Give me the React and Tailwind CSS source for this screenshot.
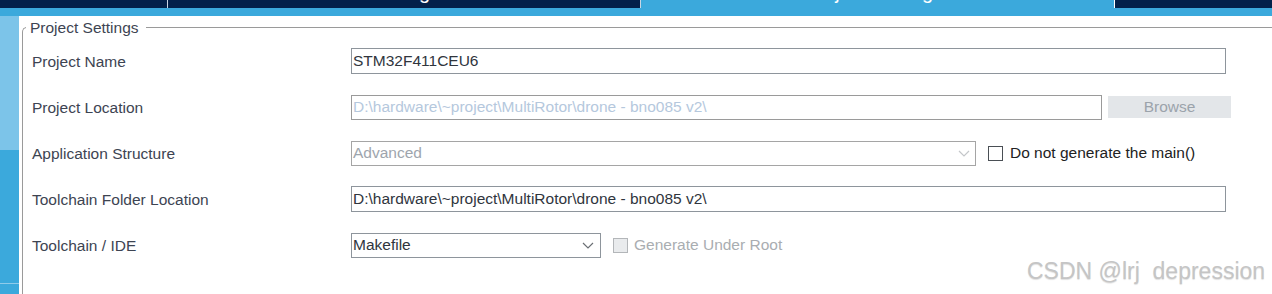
import React from 'react';

const font = { fontFamily: '"Liberation Sans", Arial, sans-serif' };

function Chevron({ color }) {
  return (
    <svg width="12" height="7" viewBox="0 0 12 7" className="shrink-0">
      <path d="M1 1 L6 6 L11 1" fill="none" stroke={color} strokeWidth="1.2" />
    </svg>
  );
}

function Row({ label, children }) {
  return (
    <div className="flex items-center h-[46px]">
      <div className="w-[319px] shrink-0 text-[15.5px] text-[#3d4452] pt-[1px]">{label}</div>
      <div className="flex items-center">{children}</div>
    </div>
  );
}

export default function App() {
  return (
    <div className="w-[1272px] h-[294px] overflow-hidden bg-white relative" style={font}>
      {/* top tab strip */}
      <div className="flex h-[8px] bg-[#03214a] overflow-hidden">
        <div className="w-[167px] shrink-0" />
        <div className="w-px bg-[#c9d6e4] shrink-0" />
        <div className="w-[472px] shrink-0 flex justify-center overflow-hidden">
          <span className="text-[20px] leading-[20px] mt-[-18px] text-white whitespace-nowrap">Clock Configuration</span>
        </div>
        <div className="w-px bg-[#c9d6e4] shrink-0" />
        <div className="w-[473px] shrink-0 bg-[#3ba9dc] flex justify-center overflow-hidden">
          <span className="text-[20px] leading-[20px] mt-[-18px] text-white whitespace-nowrap">Project Manager</span>
        </div>
        <div className="w-px bg-white shrink-0" />
        <div className="flex-1" />
      </div>
      <div className="h-[8px] bg-[#3ba9dc]" />

      <div className="flex h-[278px]">
        {/* left sidebar */}
        <div className="w-[19px] shrink-0 flex flex-col">
          <div className="h-[134px] bg-[#7cc4e9]" />
          <div className="h-[133px] bg-[#3ba9dc]" />
          <div className="h-px bg-[#8fcbea]" />
          <div className="flex-1 bg-[#3ba9dc]" />
        </div>
        <div className="w-[3px] shrink-0" />

        <fieldset className="flex-1 border-l border-t border-[#9a9a9a] rounded-tl-[5px] mt-[3px] min-w-0">
          <legend className="ml-[3px] pl-[4px] pr-[7px] text-[15.5px] leading-[17px] text-[#3d4452]">Project Settings</legend>
          <div className="pt-[2px] pl-[9px]">
            <Row label="Project Name">
              <div className="w-[875px] h-[26px] border border-[#8e959c] flex items-center px-[1px] text-[15.5px] text-[#30353d]">
                STM32F411CEU6
              </div>
            </Row>
            <Row label="Project Location">
              <div className="w-[751px] h-[25px] border border-[#9a9a9a] flex items-center px-[1px] text-[15.5px] text-[#b5c8dd] whitespace-nowrap">
                {'D:\\hardware\\~project\\MultiRotor\\drone - bno085 v2\\'}
              </div>
              <div className="ml-[6px] w-[123px] h-[22px] bg-[#e3e6e9] flex items-center justify-center text-[15.5px] text-[#9ba3ab]">
                Browse
              </div>
            </Row>
            <Row label="Application Structure">
              <div className="w-[625px] h-[25px] border border-[#a5a5a5] flex items-center justify-between pl-[1px] pr-[5px] text-[15.5px] text-[#9ea5ad]">
                <span>Advanced</span>
                <Chevron color="#c4c7ca" />
              </div>
              <div className="ml-[12px] w-[15px] h-[15px] border-[1.5px] border-[#4a4f55] bg-white" />
              <span className="ml-[7px] text-[15.5px] text-[#222]">Do not generate the main()</span>
            </Row>
            <Row label="Toolchain Folder Location">
              <div className="w-[875px] h-[26px] border border-[#8e959c] flex items-center px-[1px] text-[15.5px] text-[#30353d] whitespace-nowrap">
                {'D:\\hardware\\~project\\MultiRotor\\drone - bno085 v2\\'}
              </div>
            </Row>
            <Row label="Toolchain / IDE">
              <div className="w-[250px] h-[25px] border border-[#8e959c] flex items-center justify-between pl-[1px] pr-[6px] text-[15.5px] text-[#30353d]">
                <span>Makefile</span>
                <Chevron color="#6b6f74" />
              </div>
              <div className="ml-[12px] w-[15px] h-[15px] border-[1.5px] border-[#b3b6b9] bg-[#e9ebed]" />
              <span className="ml-[6px] text-[15.5px] text-[#a9adb1]">Generate Under Root</span>
            </Row>
          </div>
        </fieldset>
      </div>

      <div
        className="absolute left-[1027px] top-[257px] text-[23px] leading-[28px] text-[#c5c5c5] whitespace-nowrap"
        style={{ textShadow: '0 1px 1px rgba(0,0,0,0.12)' }}
      >
        CSDN @lrj&nbsp;&nbsp;depression
      </div>
    </div>
  );
}
